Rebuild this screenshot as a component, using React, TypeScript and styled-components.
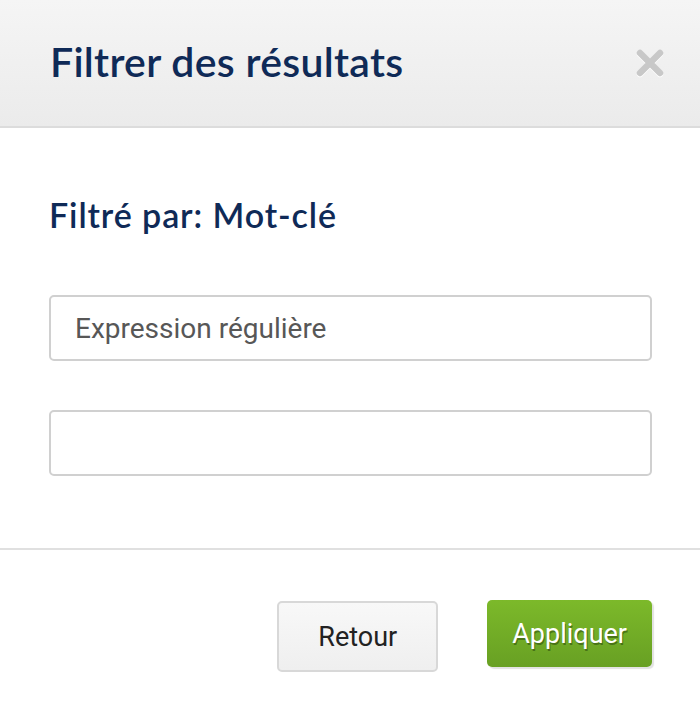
import styled, { createGlobalStyle } from 'styled-components';

const GlobalStyle = createGlobalStyle`
  html, body {
    margin: 0;
    padding: 0;
    background: #ffffff;
  }
`;

const Modal = styled.div`
  width: 700px;
  height: 720px;
  background: #ffffff;
  display: flex;
  flex-direction: column;
`;

const Header = styled.div`
  height: 128px;
  box-sizing: border-box;
  padding: 0 36px 0 50px;
  display: flex;
  align-items: center;
  justify-content: space-between;
  background: linear-gradient(#f5f5f5, #ebebeb);
  border-bottom: 2px solid #dcdcdc;
`;

const Title = styled.h1`
  margin: 0;
  padding-bottom: 4px;
  font-family: Lato, 'Liberation Sans', sans-serif;
  font-weight: 600;
  font-size: 41px;
  letter-spacing: 0.3px;
  color: #0f2a57;
`;

const CloseButton = styled.button`
  border: 0;
  background: none;
  padding: 0;
  width: 28px;
  height: 28px;
  cursor: pointer;
  filter: drop-shadow(0 1px 0 #ffffff);
`;

const Body = styled.div`
  padding: 66px 48px 0 49px;
  height: 422px;
  box-sizing: border-box;
  border-bottom: 2px solid #e0e0e0;
`;

const Subtitle = styled.h2`
  margin: 0 0 60px;
  font-family: Lato, 'Liberation Sans', sans-serif;
  font-weight: 600;
  font-size: 34px;
  letter-spacing: 0.9px;
  color: #0f2a57;
`;

const Field = styled.input`
  display: block;
  width: 100%;
  height: 66px;
  box-sizing: border-box;
  margin-bottom: 49px;
  padding: 0 24px;
  border: 2px solid #d0d0d0;
  border-radius: 5px;
  font-family: Roboto, 'Liberation Sans', sans-serif;
  font-size: 28px;
  color: #333;
  outline: none;
  &::placeholder {
    color: #575757;
  }
`;

const Footer = styled.div`
  display: flex;
  justify-content: flex-end;
  gap: 49px;
  padding: 50px 48px 0 0;
`;

const Button = styled.button<{ $primary?: boolean }>`
  height: ${(p) => (p.$primary ? '67px' : '71px')};
  margin-top: ${(p) => (p.$primary ? '0' : '1px')};
  box-sizing: border-box;
  padding: 0 ${(p) => (p.$primary ? '25px' : '39px')};
  border-radius: 5px;
  font-family: Roboto, 'Liberation Sans', sans-serif;
  font-size: 27px;
  cursor: pointer;
  border: ${(p) => (p.$primary ? '0' : '2px solid #d8d8d8')};
  background: ${(p) =>
    p.$primary
      ? 'linear-gradient(#7cb92a, #68a023)'
      : 'linear-gradient(#f8f8f8, #efefef)'};
  color: ${(p) => (p.$primary ? '#ffffff' : '#222222')};
  text-shadow: ${(p) => (p.$primary ? '1px 2px 0 rgba(40, 70, 10, 0.55)' : 'none')};
  box-shadow: ${(p) => (p.$primary ? '2px 2px 1px #e2e2e2' : 'none')};
`;

const CloseIcon = () => (
  <svg viewBox="0 0 28 28" width="28" height="28">
    <path d="M4 4 L24 24 M24 4 L4 24" stroke="#c8c8c8" strokeWidth="6.5" strokeLinecap="round" />
  </svg>
);

const App = () => {
  return (
    <>
      <GlobalStyle />
      <Modal>
        <Header>
          <Title>Filtrer des résultats</Title>
          <CloseButton aria-label="Fermer">
            <CloseIcon />
          </CloseButton>
        </Header>
        <Body>
          <Subtitle>Filtré par: Mot-clé</Subtitle>
          <Field placeholder="Expression régulière" />
          <Field />
        </Body>
        <Footer>
          <Button>Retour</Button>
          <Button $primary>Appliquer</Button>
        </Footer>
      </Modal>
    </>
  );
};

export default App;
